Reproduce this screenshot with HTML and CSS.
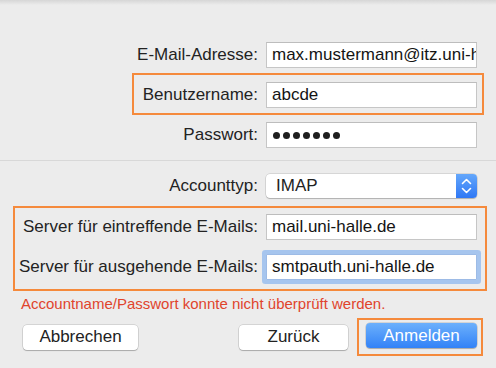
FILE: index.html
```html
<!DOCTYPE html>
<html lang="de">
<head>
    <meta charset="UTF-8">
    <meta name="viewport" content="width=device-width, initial-scale=1.0">
    <title>Account hinzufügen</title>
    <link rel="stylesheet" href="styles.css">
</head>
<body>
    <div class="titlebar-edge"></div>

    <form class="sheet">
        <div class="row row-email">
            <label class="label">E-Mail-Adresse:</label>
            <div class="field"><span class="field-text">max.mustermann@itz.uni-halle.de</span></div>
        </div>

        <div class="highlight highlight-user">
            <div class="row">
                <label class="label">Benutzername:</label>
                <div class="field"><span class="field-text">abcde</span></div>
            </div>
        </div>

        <div class="row row-pass">
            <label class="label">Passwort:</label>
            <div class="field">
                <span class="dots">
                    <i></i><i></i><i></i><i></i><i></i><i></i><i></i>
                </span>
            </div>
        </div>

        <div class="separator"></div>

        <div class="row row-type">
            <label class="label">Accounttyp:</label>
            <div class="popup">
                <span class="popup-text">IMAP</span>
                <span class="stepper">
                    <svg width="21" height="24" viewBox="0 0 21 24">
                        <path d="M6.5 9.5 L10.5 5.5 L14.5 9.5" fill="none" stroke="#fff" stroke-width="1.6" stroke-linecap="round" stroke-linejoin="round"/>
                        <path d="M6.5 14.5 L10.5 18.5 L14.5 14.5" fill="none" stroke="#fff" stroke-width="1.6" stroke-linecap="round" stroke-linejoin="round"/>
                    </svg>
                </span>
            </div>
        </div>

        <div class="highlight highlight-server">
            <div class="row">
                <label class="label">Server für eintreffende E-Mails:</label>
                <div class="field"><span class="field-text">mail.uni-halle.de</span></div>
            </div>
            <div class="row row-out">
                <label class="label">Server für ausgehende E-Mails:</label>
                <div class="field focused"><span class="field-text">smtpauth.uni-halle.de</span></div>
            </div>
        </div>

        <div class="error-message">Accountname/Passwort konnte nicht überprüft werden.</div>

        <div class="button-row">
            <button type="button" class="btn btn-cancel">Abbrechen</button>
            <button type="button" class="btn btn-back">Zurück</button>
            <div class="highlight highlight-btn">
                <button type="button" class="btn btn-primary">Anmelden</button>
            </div>
        </div>
    </form>
</body>
</html>
```

FILE: styles.css
```css
* {
    margin: 0;
    padding: 0;
    box-sizing: border-box;
}

body {
    font-family: "Liberation Sans", Arial, sans-serif;
    font-size: 17px;
    background: #ececec;
    color: #222;
    width: 496px;
    height: 368px;
    overflow: hidden;
}

.titlebar-edge {
    height: 5px;
    background: linear-gradient(180deg, #d6d6d6 0%, #ececec 100%);
}

.sheet {
    padding-top: 37px;
}

/* Rows: label right-aligned against the field */
.row {
    display: flex;
    justify-content: flex-end;
    align-items: center;
    height: 26px;
    padding-right: 19px;
}

.label {
    margin-right: 8px;
    white-space: nowrap;
    color: #232323;
}

.field {
    width: 211px;
    height: 26px;
    background: #fff;
    border: 1px solid #c6c6c6;
    border-top-color: #bdbdbd;
    padding-left: 5px;
    display: flex;
    align-items: center;
    overflow: hidden;
    white-space: nowrap;
}

.field-text {
    color: #141414;
}

.field.focused {
    box-shadow: 0 0 0 4px #a6c5ee;
    border-radius: 1px;
    border-color: #9dbbe6;
}

.dots {
    display: flex;
    gap: 3px;
    padding-left: 1px;
}

.dots i {
    display: block;
    width: 7px;
    height: 7px;
    border-radius: 50%;
    background: #1e1e1e;
}

/* Orange annotation boxes */
.highlight {
    border: 2px solid #f58a3c;
}

.highlight-user {
    margin: 5px 12px 0 132px;
    padding: 7px 3px 5px 0;
}

.highlight-user .row {
    padding-right: 2px;
}

.row-pass {
    margin-top: 7px;
}

.separator {
    height: 1px;
    background: #d8d8d8;
    margin: 12px 0 13px;
}

.row-type {
    height: 24px;
}

.popup {
    width: 211px;
    height: 24px;
    background: #fff;
    border-radius: 4px;
    box-shadow: 0 0 0 0.5px rgba(0, 0, 0, 0.18), 0 1px 1px rgba(0, 0, 0, 0.18);
    display: flex;
    align-items: center;
    justify-content: space-between;
    overflow: hidden;
}

.popup-text {
    padding-left: 10px;
}

.stepper {
    width: 21px;
    height: 24px;
    background: linear-gradient(180deg, #64a7fb 0%, #2f78f5 100%);
    display: flex;
}

.highlight-server {
    margin: 8px 9px 0 13px;
    padding: 6px 8px 9px 0;
}

.highlight-server .row {
    padding-right: 0;
}

.row-out {
    margin-top: 14px;
}

.error-message {
    color: #e0442c;
    font-size: 15px;
    line-height: 18px;
    margin: 4px 0 0 21px;
}

.button-row {
    display: flex;
    align-items: center;
    margin-top: 5px;
    padding-left: 23px;
}

.btn {
    font-family: "Liberation Sans", Arial, sans-serif;
    font-size: 17px;
    height: 25px;
    border: none;
    border-radius: 4px;
    background: #fff;
    color: #222;
    box-shadow: 0 0 0 0.5px rgba(0, 0, 0, 0.2), 0 1px 1px rgba(0, 0, 0, 0.2);
}

.btn-cancel {
    width: 115px;
}

.btn-back {
    width: 109px;
    margin-left: 101px;
}

.highlight-btn {
    margin-left: 9px;
    padding: 3px 4px 6px 7px;
}

.btn-primary {
    width: 111px;
    display: block;
    color: #fff;
    background: linear-gradient(180deg, #6cb0fc 0%, #3282f7 100%);
}
```
